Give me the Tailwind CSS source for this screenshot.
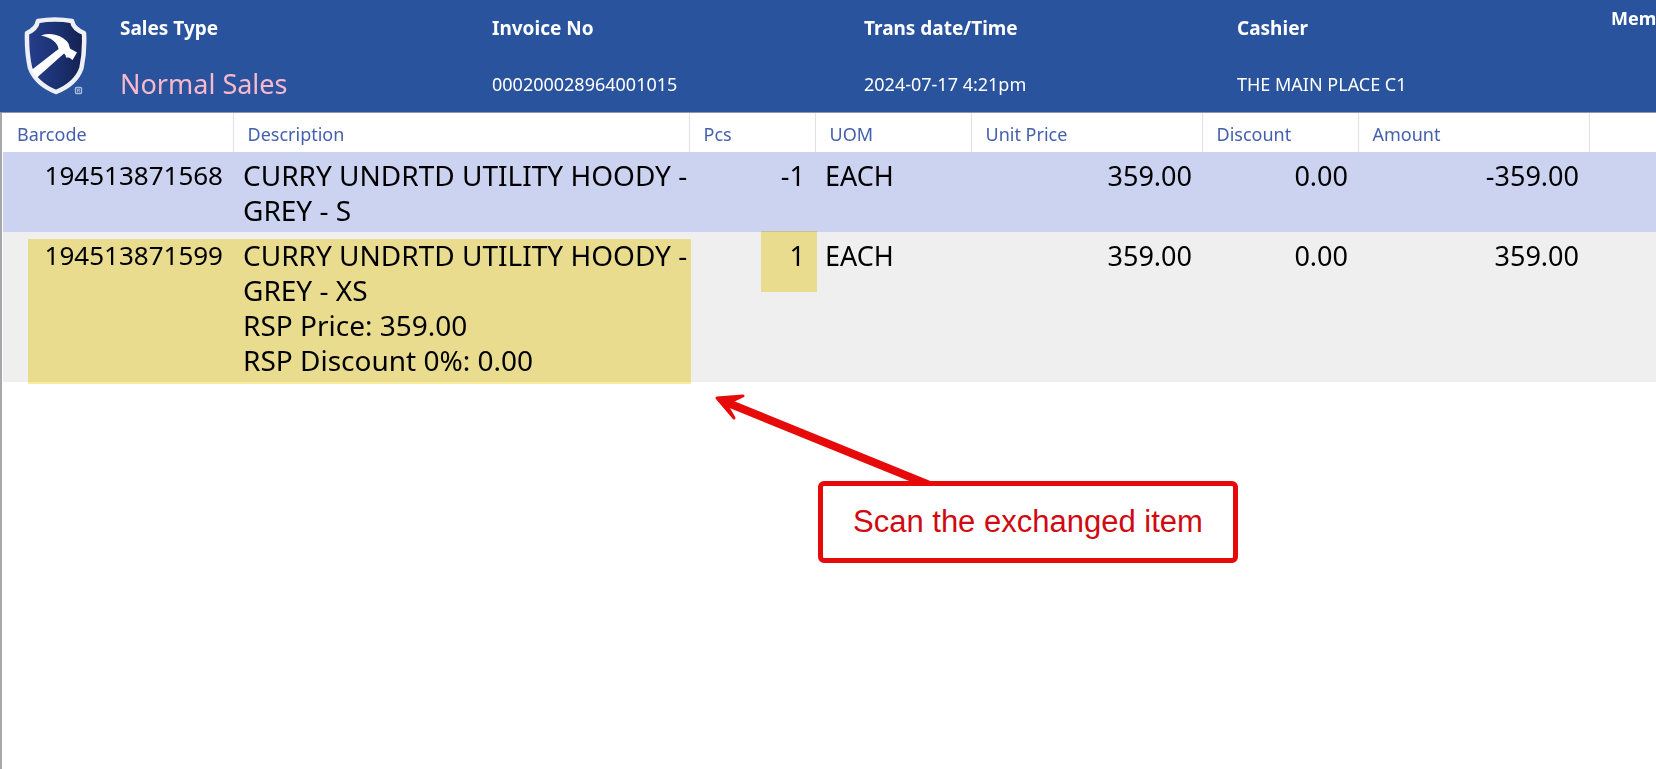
<!DOCTYPE html>
<html lang="en">
<head>
    <meta charset="UTF-8">
    <meta name="viewport" content="width=device-width, initial-scale=1.0">
    <title>POS - Normal Sales</title>
    <script src="https://cdn.jsdelivr.net/npm/@tailwindcss/browser@4"></script>
</head>
<body class="bg-white font-['Noto_Sans',sans-serif] overflow-x-hidden">
    <div class="flex flex-col min-h-screen">

        <!-- Transaction header -->
        <header class="flex h-[113px] bg-[#2a539d] text-white text-lg leading-6 whitespace-nowrap overflow-hidden border-b border-[#8f97a6]">
            <div class="w-[120px] shrink-0 pl-6 pt-4">
                <svg class="w-16 h-20" viewBox="0 0 64 80" role="img" aria-label="Shield logo">
                    <defs>
                        <linearGradient id="shieldFill" x1="0" y1="0" x2="1" y2="0">
                            <stop offset="0" stop-color="#263f8c"/>
                            <stop offset="0.5" stop-color="#1c3274"/>
                            <stop offset="1" stop-color="#14204f"/>
                        </linearGradient>
                    </defs>
                    <path d="M14 5 Q31 2 48 5 Q49.500 13 60 17 Q61 36 57.500 52 Q52 68 32 76 Q12 68 6 52 Q2.500 36 3 17 Q12.500 13 14 5 Z" fill="url(#shieldFill)" stroke="#eef0f4" stroke-width="4.500" stroke-linejoin="round"/>
                    <path d="M17 19.500 Q24 17 32 19 Q40 21 44.500 27.500 L46 32.500 L53 36.500 L48.500 44 L45 41.500 L42 41.500 Q42 38.500 40 37.500 L12.500 62 L7.500 54 L34.500 33 Q33 23 17 19.500 Z" fill="#fff"/>
                    <rect x="51.500" y="71.500" width="6" height="6" rx="1" fill="none" stroke="#a9bbdc" stroke-width="1.400"/>
                    <path d="M53.500 76.500 V73 h2 v1.500 h-2 m1 0 l1.500 2" fill="none" stroke="#a9bbdc" stroke-width="0.800"/>
                </svg>
            </div>
            <dl class="flex">
                <div class="w-[372px] shrink-0 pt-4">
                    <dt class="text-[19px] font-bold">Sales Type</dt>
                    <dd class="pt-6 text-[27px] leading-10 text-[#f8b8cd]">Normal Sales</dd>
                </div>
                <div class="w-[372px] shrink-0 pt-4">
                    <dt class="text-[19px] font-bold">Invoice No</dt>
                    <dd class="pt-8">000200028964001015</dd>
                </div>
                <div class="w-[373px] shrink-0 pt-4">
                    <dt class="text-[19px] font-bold">Trans date/Time</dt>
                    <dd class="pt-8">2024-07-17 4:21pm</dd>
                </div>
                <div class="w-[374px] shrink-0 pt-4">
                    <dt class="text-[19px] font-bold">Cashier</dt>
                    <dd class="pt-8">THE MAIN PLACE C1</dd>
                </div>
                <div class="shrink-0 pt-1.5">
                    <dt class="font-bold">Mem</dt>
                </div>
            </dl>
        </header>

        <!-- Item list -->
        <main class="relative grow border-l-2 border-[#a5a7ab] pl-px">
            <table class="w-full table-fixed border-collapse text-left">
                <colgroup>
                    <col class="w-[230px]">
                    <col class="w-[456px]">
                    <col class="w-[126px]">
                    <col class="w-[156px]">
                    <col class="w-[231px]">
                    <col class="w-[156px]">
                    <col class="w-[231px]">
                    <col>
                </colgroup>
                <thead class="text-lg leading-6 text-[#4460ad]">
                    <tr class="h-[39px]">
                        <th class="pl-3.5 pt-0.5 font-normal border-r border-[#dfe1e6]">Barcode</th>
                        <th class="pl-3.5 pt-0.5 font-normal border-r border-[#dfe1e6]">Description</th>
                        <th class="pl-3.5 pt-0.5 font-normal border-r border-[#dfe1e6]">Pcs</th>
                        <th class="pl-3.5 pt-0.5 font-normal border-r border-[#dfe1e6]">UOM</th>
                        <th class="pl-3.5 pt-0.5 font-normal border-r border-[#dfe1e6]">Unit Price</th>
                        <th class="pl-3.5 pt-0.5 font-normal border-r border-[#dfe1e6]">Discount</th>
                        <th class="pl-3.5 pt-0.5 font-normal border-r border-[#dfe1e6]">Amount</th>
                        <td></td>
                    </tr>
                </thead>
                <tbody class="text-[27px] leading-[35px] text-black align-top">
                    <tr class="bg-[#ccd3f0]">
                        <td class="pt-1.5 pb-1 pr-2.5 text-right text-[26px]">194513871568</td>
                        <td class="pt-1.5 pb-1 pl-2.5 whitespace-nowrap text-[28px]">CURRY UNDRTD UTILITY HOODY -<br>GREY - S</td>
                        <td class="pt-1.5 pb-1 pr-2.5 text-right">-1</td>
                        <td class="pt-1.5 pb-1 pl-2.5">EACH</td>
                        <td class="pt-1.5 pb-1 pr-2.5 text-right">359.00</td>
                        <td class="pt-1.5 pb-1 pr-2.5 text-right">0.00</td>
                        <td class="pt-1.5 pb-1 pr-2.5 text-right">-359.00</td>
                        <td></td>
                    </tr>
                    <tr class="bg-[#efefef]">
                        <td class="pt-1.5 pb-1 pr-2.5 text-right text-[26px]">194513871599</td>
                        <td class="pt-1.5 pb-1 pl-2.5 whitespace-nowrap text-[28px]">CURRY UNDRTD UTILITY HOODY -<br>GREY - XS<br>RSP Price: 359.00<br>RSP Discount 0%: 0.00</td>
                        <td class="pt-1.5 pb-1 pr-2.5 text-right">1</td>
                        <td class="pt-1.5 pb-1 pl-2.5">EACH</td>
                        <td class="pt-1.5 pb-1 pr-2.5 text-right">359.00</td>
                        <td class="pt-1.5 pb-1 pr-2.5 text-right">0.00</td>
                        <td class="pt-1.5 pb-1 pr-2.5 text-right">359.00</td>
                        <td></td>
                    </tr>
                </tbody>
            </table>

            <!-- Marker highlights over the exchanged item -->
            <div class="absolute left-[26px] top-[126px] w-[663px] h-[145px] bg-[#f9eb99] mix-blend-multiply"></div>
            <div class="absolute left-[759px] top-[118px] w-[56px] h-[61px] bg-[#f9eb99] mix-blend-multiply"></div>

            <!-- Callout -->
            <svg class="absolute left-[706px] top-[277px] w-[226px] h-[96px]" viewBox="0 0 226 96" fill="none" stroke="#e60a0a" stroke-linecap="round" stroke-linejoin="round" aria-hidden="true">
                <path d="M20 13 L224 96" stroke-width="8" stroke-linecap="butt"/>
                <path d="M35 6 L9 8 L26 28 L18 14 Z" fill="#e60a0a" stroke-width="3"/>
            </svg>
            <p class="absolute left-[816px] top-[368px] px-[30px] py-[18px] border-[5px] border-[#e60a0a] rounded-md bg-white font-['Liberation_Sans',sans-serif] text-[31px] leading-9 text-[#cf0a10] whitespace-nowrap">Scan the exchanged item</p>
        </main>
    </div>
</body>
</html>
